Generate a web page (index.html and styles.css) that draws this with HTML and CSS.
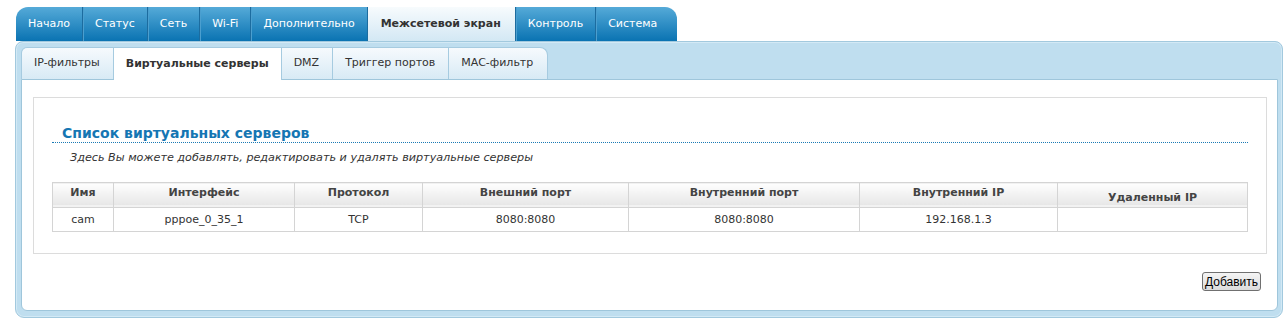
FILE: index.html
```html
<!DOCTYPE html>
<html lang="ru">
<head>
    <meta charset="UTF-8">
    <title>Виртуальные серверы</title>
    <link rel="stylesheet" href="styles.css">
</head>
<body>
    <div id="page">
        <ul class="menu">
            <li>Начало</li>
            <li>Статус</li>
            <li>Сеть</li>
            <li>Wi-Fi</li>
            <li>Дополнительно</li>
            <li class="active">Межсетевой экран</li>
            <li>Контроль</li>
            <li>Система</li>
        </ul>
        <div class="panel">
            <ul class="submenu">
                <li>IP-фильтры</li>
                <li class="active">Виртуальные серверы</li>
                <li>DMZ</li>
                <li>Триггер портов</li>
                <li>MAC-фильтр</li>
            </ul>
            <div class="content">
                <div class="box">
                    <h2 class="title">Список виртуальных серверов</h2>
                    <p class="desc">Здесь Вы можете добавлять, редактировать и удалять виртуальные серверы</p>
                    <table class="grid">
                        <colgroup>
                            <col style="width: 61px">
                            <col style="width: 181px">
                            <col style="width: 128px">
                            <col style="width: 206px">
                            <col style="width: 231px">
                            <col style="width: 198px">
                            <col>
                        </colgroup>
                        <thead>
                            <tr>
                                <th>Имя</th>
                                <th>Интерфейс</th>
                                <th>Протокол</th>
                                <th>Внешний порт</th>
                                <th>Внутренний порт</th>
                                <th>Внутренний IP</th>
                                <th class="low">Удаленный IP</th>
                            </tr>
                        </thead>
                        <tbody>
                            <tr>
                                <td>cam</td>
                                <td>pppoe_0_35_1</td>
                                <td>TCP</td>
                                <td>8080:8080</td>
                                <td>8080:8080</td>
                                <td>192.168.1.3</td>
                                <td></td>
                            </tr>
                        </tbody>
                    </table>
                </div>
                <div class="actions">
                    <button>Добавить</button>
                </div>
            </div>
        </div>
    </div>
</body>
</html>
```

FILE: styles.css
```css
body {
    margin: 0;
    padding: 7px 3px 0 15px;
    background-color: white;
    font-family: "DejaVu Sans", Verdana, sans-serif;
    font-size: 11px;
    color: #333;
}

ul {
    list-style: none;
    margin: 0;
    padding: 0;
}

.menu {
    display: flex;
    margin-left: 1px;
    height: 34px;
}

.menu li {
    display: flex;
    align-items: center;
    padding: 0 12px 2px 12px;
    color: white;
    background: linear-gradient(#55aad8, #0a73b2);
    border-right: 1px solid #1c6c9f;
    box-shadow: inset 1px 0 0 #4b9fcf;
}

.menu li:first-child {
    border-top-left-radius: 12px;
    box-shadow: none;
}

.menu li:last-child {
    border-top-right-radius: 12px;
    border-right: none;
    padding-right: 20px;
}

.menu li.active {
    font-weight: bold;
    color: #333;
    background: linear-gradient(#f7fbfd, #d3e8f4);
    box-shadow: none;
    padding: 0 14px 2px 13px;
}

.panel {
    background-color: #bfdeef;
    border: 1px solid #a2c9de;
    border-radius: 8px 8px 9px 9px;
    padding: 5px 4px 6px 5px;
    box-shadow: inset 0 0 0 1px #d3e9f5;
}

.submenu {
    display: flex;
    height: 32px;
}

.submenu li {
    display: flex;
    align-items: center;
    padding: 0 13px 2px 12px;
    color: #333;
    background: linear-gradient(#f6fafd, #d8eaf5);
    border: 1px solid #a6cbe0;
    border-left: none;
    border-bottom: none;
}

.submenu li:first-child {
    border-left: 1px solid #a6cbe0;
    border-top-left-radius: 6px;
}

.submenu li:last-child {
    border-top-right-radius: 8px;
    padding-right: 14px;
}

.submenu li.active {
    font-weight: bold;
    background: white;
    margin-bottom: -1px;
    position: relative;
    padding: 0 12px 1px 12px;
}

.content {
    background-color: white;
    border: 1px solid #9fc6db;
    border-radius: 0 0 6px 6px;
    padding: 17px 10px 19px 11px;
}

.box {
    border: 1px solid #dcdcdc;
    padding: 27px 18px 21px 18px;
}

.title {
    margin: 0;
    padding: 0 0 1px 10px;
    font-size: 14px;
    color: #1576b3;
    border-bottom: 1px dotted #1a7ab5;
}

.desc {
    margin: 8px 0 0 18px;
    font-size: 11.2px;
    font-style: italic;
    color: #333;
}

.grid {
    width: 100%;
    margin-top: 18px;
    border-collapse: collapse;
    table-layout: fixed;
}

.grid th,
.grid td {
    border: 1px solid #d4d4d4;
    text-align: center;
}

.grid thead tr {
    height: 25px;
}

.grid tbody tr {
    height: 24px;
}

.grid th {
    padding: 3px 4px 0;
    vertical-align: top;
    color: #444;
    background: linear-gradient(#fefefe, #e4e4e4);
    box-shadow: inset 0 -2px 0 #f2f2f2;
}

.grid th.low {
    padding-top: 8px;
}

.grid td {
    padding: 0 4px;
    color: #333;
}

.actions {
    display: flex;
    justify-content: flex-end;
    margin-top: 18px;
    padding-right: 6px;
}

button {
    font-family: "Liberation Sans", Arial, sans-serif;
    font-size: 12px;
    color: black;
    height: 19px;
    padding: 0 2px;
    border: 1px solid #707070;
    border-radius: 3px;
    background: linear-gradient(#f4f4f4, #dcdcdc);
}
```
